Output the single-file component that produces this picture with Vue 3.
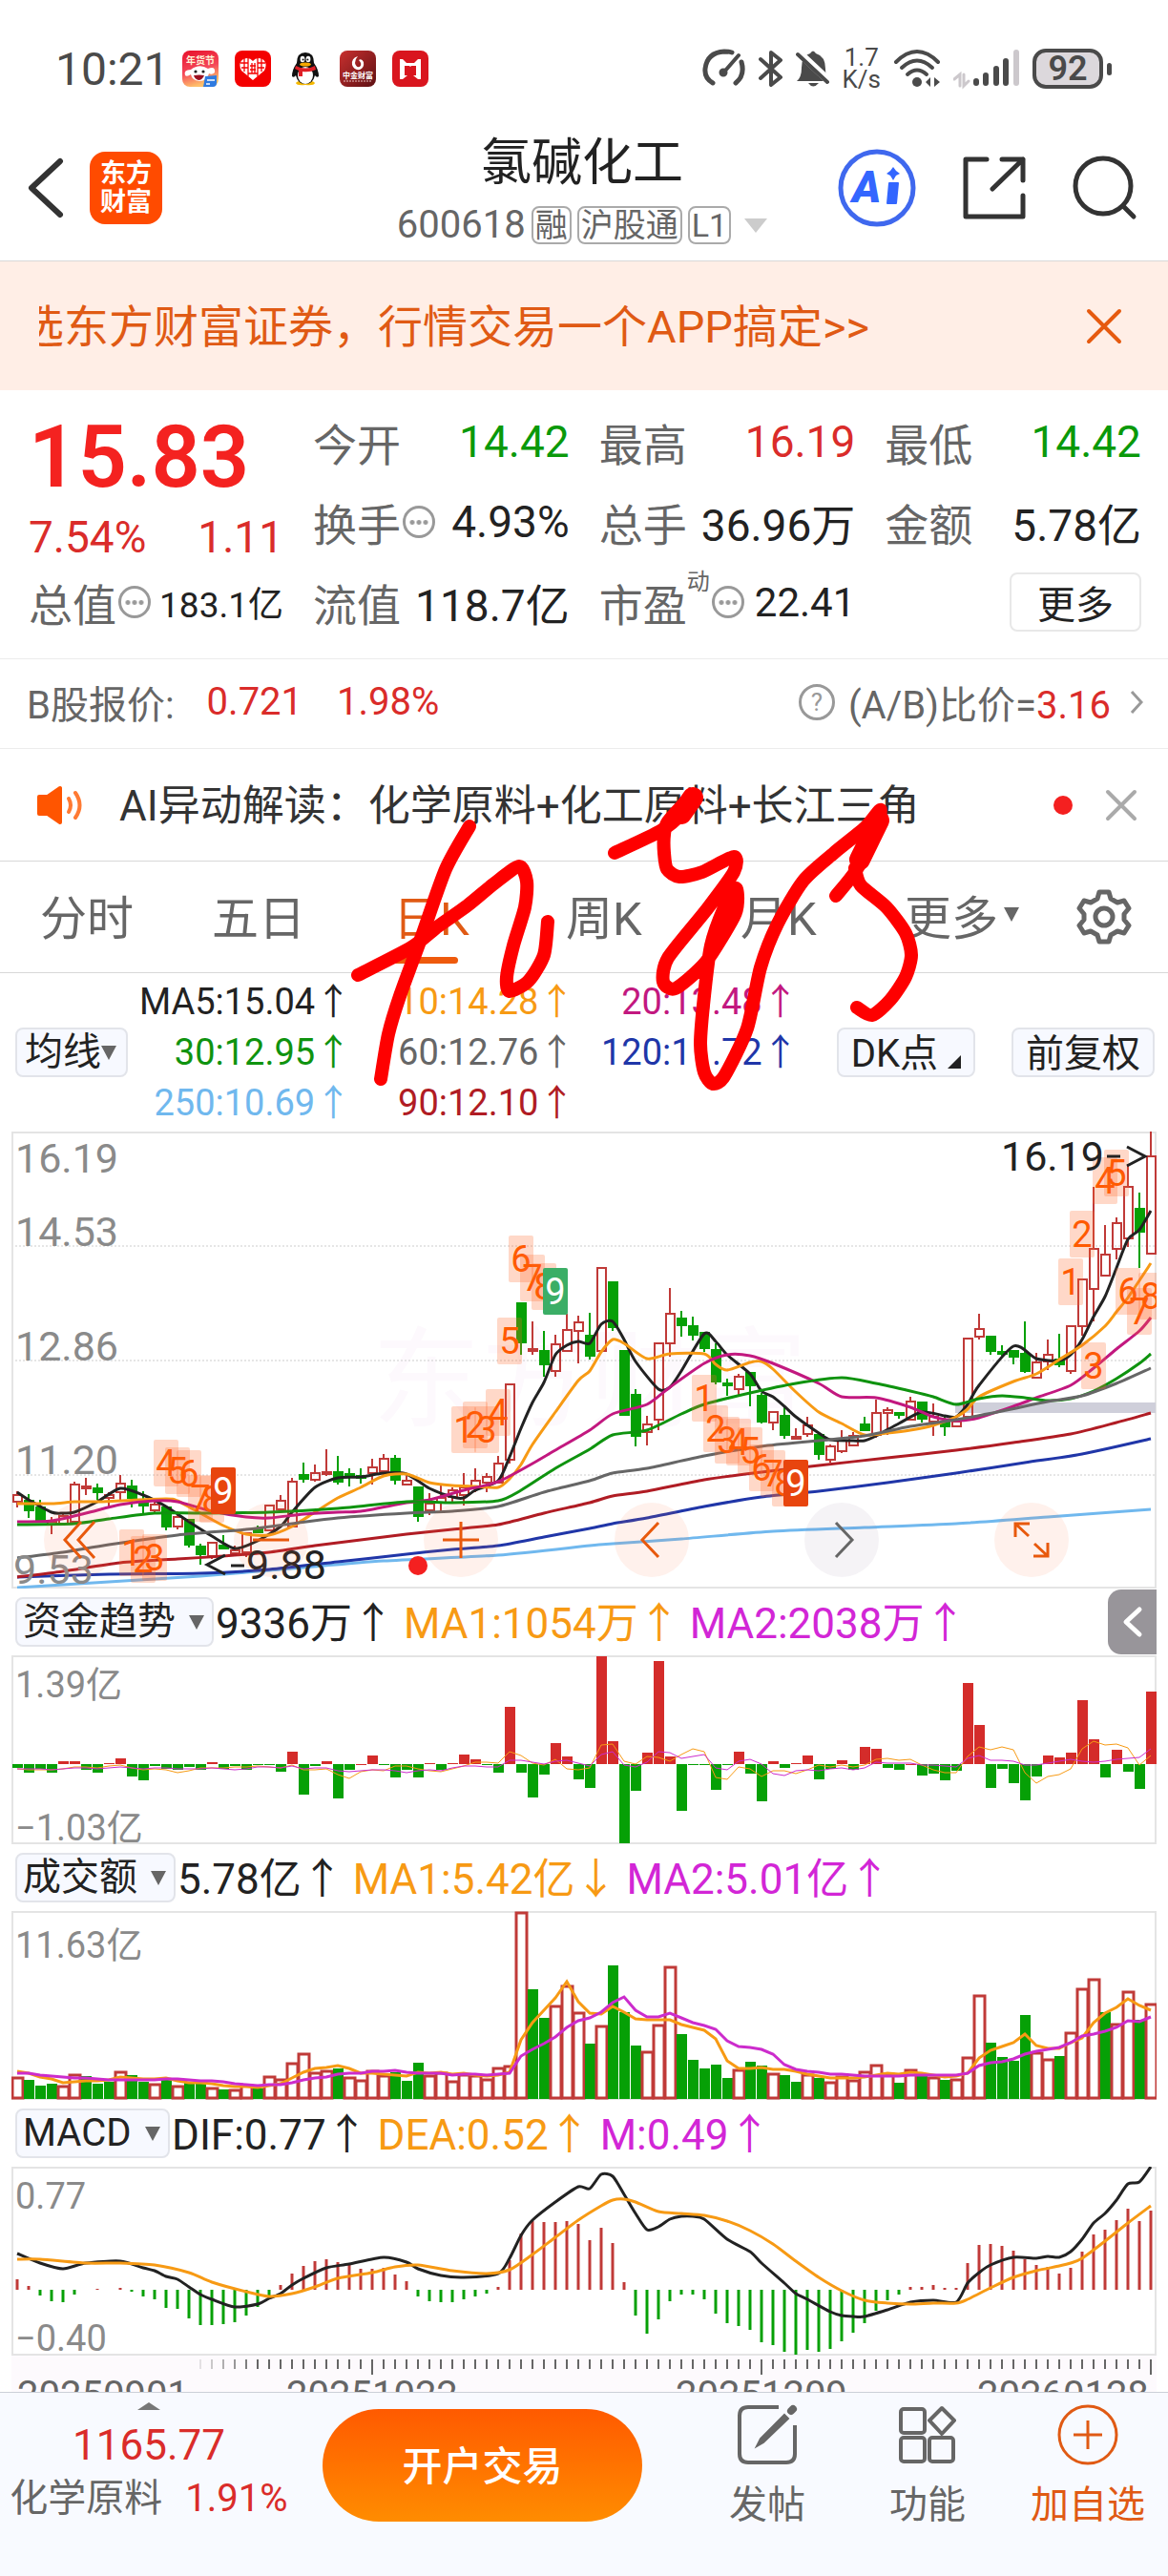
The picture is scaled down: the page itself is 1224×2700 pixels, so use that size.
<template>
  <div class="stock-page">
    <div class="status-bar">
      <div class="status-left">
        <span class="clock">10:21</span>
        <svg class="app-icon" viewBox="0 0 38 38">
          <defs>
            <linearGradient id="festival" x1="0" y1="0" x2="0.3" y2="1">
              <stop offset="0" stop-color="#e8102a" />
              <stop offset="0.6" stop-color="#f4485a" />
              <stop offset="1" stop-color="#ffc06a" />
            </linearGradient>
          </defs>
          <rect width="38" height="38" rx="8" fill="url(#festival)" />
          <text x="19" y="14" font-size="10" font-weight="700" fill="#fff3d8" text-anchor="middle">年货节</text>
          <path d="M3 26 Q1 20 9 20 Q18 13 27 19 Q35 16 34 23 Q31 26 28 24 Q26 32 18 32 Q10 31 9 25 Q5 28 3 26Z" fill="#fff" />
          <circle cx="14" cy="22" r="1.6" fill="#222" />
          <circle cx="22" cy="22" r="1.6" fill="#222" />
          <path d="M12 26 Q18 25 23 26 Q21 31 17 31 Q13 30 12 26Z" fill="#9c1020" />
          <path d="M24 27 L36 26 V34 Q36 38 32 38 H22Z" fill="#2f7be0" />
          <path d="M26 31 H34 M25 35 H29" stroke="#fff" stroke-width="1.4" />
        </svg>
        <svg class="app-icon" viewBox="0 0 38 38">
          <rect width="38" height="38" rx="8" fill="#f40000" />
          <path d="M19 31 L7 21 Q3 13 9 9 Q15 6 19 11 Q23 6 29 9 Q35 13 31 21Z" fill="#fff" />
          <path d="M10 8 V22 M14 8 V27 M24 8 V27 M28 8 V22 M6 13 H14 M7 18 H14 M24 13 H32 M24 18 H31 M16 16 H22 M16 20 H22 M18 13 V24 M21 13 V24 M14 24 H24" stroke="#f40000" stroke-width="1.3" />
        </svg>
        <svg class="app-icon" viewBox="0 0 38 38">
          <path d="M9 34 Q11 31 19 32 Q27 31 29 34 Q28 37 19 36 Q10 37 9 34Z" fill="#f5b800" />
          <path d="M19 2 Q28 2 28 13 Q33 20 33 27 Q31 29 29 26 Q27 35 19 35 Q11 35 9 26 Q7 29 5 27 Q5 20 10 13 Q10 2 19 2Z" fill="#111" />
          <ellipse cx="19" cy="26" rx="8" ry="9" fill="#fff" />
          <ellipse cx="16" cy="9" rx="2.4" ry="3.2" fill="#fff" />
          <ellipse cx="22" cy="9" rx="2.4" ry="3.2" fill="#fff" />
          <circle cx="16.6" cy="9.4" r="1" fill="#111" />
          <circle cx="21.4" cy="9.4" r="1" fill="#111" />
          <ellipse cx="19" cy="14.5" rx="6" ry="2" fill="#f5a800" />
          <path d="M9 16 Q19 21 29 16 L30 20 Q24 23 16 22 V27 H12 V21 L8 19Z" fill="#e01f26" />
        </svg>
        <svg class="app-icon" viewBox="0 0 38 38">
          <defs>
            <linearGradient id="cicc" x1="0" y1="0" x2="1" y2="1">
              <stop offset="0" stop-color="#c9302f" />
              <stop offset="1" stop-color="#5d1013" />
            </linearGradient>
          </defs>
          <rect width="38" height="38" rx="8" fill="url(#cicc)" />
          <path d="M19 6 Q12 8 13 15 Q15 21 21 20 Q26 18 25 12 Q23 8 20 10 Q24 14 21 17 Q17 18 16 13 Q16 9 19 6Z" fill="#fff" />
          <text x="19" y="29" font-size="8" font-weight="700" fill="#fff" text-anchor="middle">中金财富</text>
          <path d="M4 32 H34" stroke="#e9c4c4" stroke-width="1" stroke-dasharray="2 1" />
        </svg>
        <svg class="app-icon" viewBox="0 0 38 38">
          <rect width="38" height="38" rx="8" fill="#d9151e" />
          <path d="M8 30 V9 H11 L15 13 H23 L27 9 H30 V30 H27 L22 26 H25 V16 H13 V26 H16 L11 30Z" fill="#fff" />
          <path d="M15 13 H23 L19 17Z" fill="#fff" />
        </svg>
      </div>
      <div class="status-right">
        <svg width="46" height="44" viewBox="0 0 46 44" fill="none" stroke="#4a4a4a" stroke-width="5" stroke-linecap="round">
          <path d="M11 37 Q2 32 3 22 Q5 5 23 4 Q28 4 31 5" />
          <path d="M41 15 Q45 29 35 37" />
          <path d="M38 8 L24 24" stroke-width="4" />
          <circle cx="22" cy="26" r="3" fill="#4a4a4a" stroke-width="3" />
        </svg>
        <svg width="26" height="44" viewBox="0 0 26 44" fill="none" stroke="#4a4a4a" stroke-width="4" stroke-linejoin="round" stroke-linecap="round">
          <path d="M2 12 L23 31 L13 39 V5 L23 13 L2 32" />
        </svg>
        <svg width="36" height="44" viewBox="0 0 36 44">
          <path d="M1 35 Q6 31 6 21 Q6 8 15 6 Q18 1 21 6 Q31 9 31 22 Q31 31 35 35Z M13 37 H24 Q18 44 13 37Z" fill="#4a4a4a" />
          <path d="M2 4 L36 36" stroke="#fff" stroke-width="8" />
          <path d="M2 7 L33 36" stroke="#4a4a4a" stroke-width="4" stroke-linecap="round" />
        </svg>
        <div class="net-speed"><span>1.7</span><span>K/s</span></div>
        <svg width="50" height="44" viewBox="0 0 50 44" fill="none" stroke="#4a4a4a" stroke-width="4" stroke-linecap="round">
          <path d="M3 15 Q25 -7 47 15" />
          <path d="M9 21 Q25 6 41 21" />
          <path d="M15 28 Q25 19 35 28" />
          <circle cx="25" cy="36" r="5" fill="#4a4a4a" stroke="none" />
          <path d="M34 36 L39 31 V41Z M43 31 V41 L49 36Z" fill="#4a4a4a" stroke="none" />
        </svg>
        <svg width="70" height="44" viewBox="0 0 70 44" fill="none" stroke="#4a4a4a" stroke-width="6" stroke-linecap="round">
          <path d="M1 33 L7 28 V40 M11 28 V40 L16 35" stroke="#ccc8cc" stroke-width="3" />
          <path d="M24 35 V37 M34 29 V37 M45 22 V37 M55 14 V37" />
          <path d="M66 5 V37" stroke="#ccc8cc" />
        </svg>
        <div class="battery">92</div>
      </div>
    </div>

    <header class="top-bar">
      <div class="top-left">
        <button class="icon-btn" aria-label="返回">
          <svg width="40" height="64" viewBox="0 0 40 64" fill="none" stroke="#333" stroke-width="6" stroke-linecap="round" stroke-linejoin="round">
            <path d="M35 4 L5 32 L35 60" />
          </svg>
        </button>
        <div class="brand"><span>东方</span><span>财富</span></div>
      </div>
      <div class="top-title">
        <h1>氯碱化工</h1>
        <div class="sub-title">
          <span>600618</span>
          <span class="tag">融</span>
          <span class="tag">沪股通</span>
          <span class="tag">L1</span>
          <i class="tri tri-light"></i>
        </div>
      </div>
      <div class="top-right">
        <button class="icon-btn" aria-label="AI">
          <svg width="82" height="82" viewBox="0 0 82 82">
            <circle cx="41" cy="41" r="38" fill="none" stroke="#3f68ee" stroke-width="5" />
            <text x="15" y="56" font-size="46" font-weight="900" font-style="italic" fill="#3366ff">A</text>
            <path d="M54 36 H63 L61 57 H52Z" fill="#3366ff" stroke="#3366ff" stroke-width="2" stroke-linejoin="round" />
            <path d="M58 19 L61 23 L65 26 L61 28 L58 33 L55 28 L51 26 L55 23Z" fill="#3366ff" />
          </svg>
        </button>
        <button class="icon-btn" aria-label="分享">
          <svg width="68" height="68" viewBox="0 0 68 68" fill="none" stroke="#333" stroke-width="5" stroke-linecap="round" stroke-linejoin="round">
            <path d="M26 4 H4 V64 H64 V42 M42 4 H64 V26 M64 4 L32 35" />
          </svg>
        </button>
        <button class="icon-btn" aria-label="搜索">
          <svg width="68" height="68" viewBox="0 0 68 68" fill="none" stroke="#333" stroke-width="5" stroke-linecap="round">
            <circle cx="32" cy="32" r="29" />
            <path d="M53 53 L64 64" />
          </svg>
        </button>
      </div>
    </header>

    <div class="promo">
      <div class="promo-text"><a href="#">选东方财富证券，行情交易一个APP搞定&gt;&gt;</a></div>
      <button class="icon-btn" aria-label="关闭广告">
        <svg width="38" height="38" viewBox="0 0 38 38" stroke="#e65a0f" stroke-width="4" stroke-linecap="round">
          <path d="M3 3 L35 35 M35 3 L3 35" />
        </svg>
      </button>
    </div>

    <section class="quote">
      <div class="quote-main">
        <div class="price">15.83</div>
        <div class="change"><span>7.54%</span><span>1.11</span></div>
        <div class="cell">
          <span class="cell-label">总值<i class="more-dot"></i></span>
          <span class="cell-value tiny">183.1亿</span>
        </div>
      </div>
      <div class="quote-grid">
        <div v-for="item in quotes" :key="item.label" class="cell">
          <span class="cell-label">{{ item.label }}<sup v-if="item.sup">{{ item.sup }}</sup><i v-if="item.tip" class="more-dot"></i></span>
          <span class="cell-value" :class="[item.tone, { small: item.small }]">{{ item.value }}</span>
        </div>
        <div class="cell cell-end">
          <button class="more-btn">更多</button>
        </div>
      </div>
    </section>

    <section class="b-share">
      <span>B股报价:</span>
      <span class="up b-price">0.721</span>
      <span class="up b-rate">1.98%</span>
      <span class="help">?</span>
      <span>(A/B)比价=<b class="up">3.16</b></span>
      <svg class="b-arrow" width="14" height="26" viewBox="0 0 14 26" fill="none" stroke="#999" stroke-width="3">
        <path d="M2 2 L12 13 L2 24" />
      </svg>
    </section>

    <div class="mid">
      <section class="ai-row">
        <svg width="50" height="42" viewBox="0 0 50 42" fill="none" stroke="#ff7a33" stroke-width="4" stroke-linecap="round">
          <path d="M3 12 H12 L25 3 V39 L12 30 H3Z" fill="#ff5500" stroke="#ff5500" stroke-linejoin="round" />
          <path d="M34 14 Q38 21 34 28" />
          <path d="M41 8 Q50 21 41 34" />
        </svg>
        <span class="ai-text">AI异动解读：化学原料+化工原料+长江三角</span>
        <i class="red-dot"></i>
        <button class="icon-btn" aria-label="关闭">
          <svg width="34" height="34" viewBox="0 0 34 34" stroke="#aaa" stroke-width="4" stroke-linecap="round">
            <path d="M3 3 L31 31 M31 3 L3 31" />
          </svg>
        </button>
      </section>

      <nav class="tabs">
        <button v-for="tab in tabs" :key="tab" class="tab" :class="{ active: tab === activeTab }" @click="activeTab = tab">
          {{ tab }}<i v-if="tab === '更多'" class="tri"></i>
        </button>
        <button class="icon-btn" aria-label="设置">
          <svg width="58" height="58" viewBox="0 0 58 58" fill="none" stroke="#666" stroke-width="5" stroke-linejoin="round">
            <path d="M24 3 H34 L36 10 L43 14 L50 12 L55 20 L50 26 V32 L55 38 L50 46 L43 44 L36 48 L34 55 H24 L22 48 L15 44 L8 46 L3 38 L8 32 V26 L3 20 L8 12 L15 14 L22 10Z" />
            <circle cx="29" cy="29" r="9" />
          </svg>
        </button>
      </nav>

      <section class="ma-row">
        <label class="pill">
          <select aria-label="主图指标"><option>均线</option></select>
          <i class="tri"></i>
        </label>
        <div class="ma-list">
          <span v-for="ma in maList" :key="ma.text" :class="ma.cls">{{ ma.text }}↑</span>
        </div>
        <button class="pill dk">DK点<i class="corner"></i></button>
        <button class="pill">前复权</button>
      </section>

      <!-- 手写批注 -->
      <svg class="ink" viewBox="0 0 1224 402" fill="none" stroke="#fe0000" stroke-width="14" stroke-linecap="round" stroke-linejoin="round">
        <path v-for="(stroke, n) in inkStrokes" :key="n" :d="smooth(stroke)" />
        <path d="M714 68 L726 51 M901 116 L921 75" stroke-width="22" />
      </svg>
    </div>

    <main class="charts">
      <div class="k-chart">
        <svg class="chart" viewBox="0 0 1200 479">
          <text x="378" y="300" font-size="114" fill="#fdf9fd">东方财富</text>
          <path class="grid-line" d="M0 120 H1200 M0 240 H1200 M0 360 H1200" />
          <rect class="frame" x="1" y="1" width="1198" height="477" />
          <rect x="989" y="284" width="210" height="11" fill="#cfcfda" />
          <g v-for="(c, i) in candles" :key="i" :class="c[0] ? 'k-up' : 'k-down'">
            <path :d="`M${cx(i)} ${c[1]} V${c[2]} M${cx(i)} ${c[3]} V${c[4]}`" />
            <rect :x="cx(i) - 4" :y="c[2]" width="9" :height="Math.max(c[3] - c[2], 1)" />
          </g>
          <path v-for="line in maLines" :key="line.cls" class="ma-line" :class="line.cls" :d="smooth(line.points.map(p => [cx(p[0]), p[1]]))" />
          <g class="axis-text">
            <text x="4" y="43">16.19</text>
            <text x="4" y="120">14.53</text>
            <text x="4" y="240">12.86</text>
            <text x="4" y="359">11.20</text>
            <text x="2" y="474">9.53</text>
          </g>
          <g v-for="(m, n) in marks" :key="n" :class="['mark', m[3]]">
            <rect :x="cx(m[0]) - 13" :y="m[1]" width="26" height="49" rx="2" />
            <text :x="cx(m[0])" :y="m[1] + 38">{{ m[2] }}</text>
          </g>
          <text class="peak" x="1037" y="41">16.19</text>
          <path class="peak-arrow" d="M1148 26 H1162 M1169 16 L1188 26 L1169 36" />
          <text class="peak" x="246" y="469">9.88</text>
          <path class="peak-arrow" d="M224 444 L205 454 L224 464 M230 455 H244" />
          <circle cx="426" cy="455" r="10" fill="#f42020" />
        </svg>
        <div class="k-tools">
          <button v-for="tool in tools" :key="tool.name" class="round-btn" :class="{ gray: tool.gray }" :aria-label="tool.name">
            <svg width="40" height="40" viewBox="0 0 40 40"><path :d="tool.d" /></svg>
          </button>
        </div>
      </div>

      <div class="ind-row">
        <label class="pill">
          <select aria-label="副图指标一"><option>资金趋势</option></select>
          <i class="tri"></i>
        </label>
        <span>9336万↑</span>
        <span class="orange">MA1:1054万↑</span>
        <span class="purple">MA2:2038万↑</span>
        <button class="side-tab" aria-label="展开">
          <svg width="22" height="34" viewBox="0 0 22 34" fill="none" stroke="#fff" stroke-width="5" stroke-linecap="round" stroke-linejoin="round">
            <path d="M18 4 L4 17 L18 30" />
          </svg>
        </button>
      </div>
      <svg class="chart" viewBox="0 0 1200 198">
        <rect class="frame" x="1" y="1" width="1198" height="196" />
        <rect v-for="(v, i) in flows" :key="i" :x="cx(i) - 5" :y="v > 0 ? 114 - v : 114" width="11" :height="Math.max(Math.abs(v), 1)" :fill="v >= 0 ? '#d42c2a' : '#06a006'" />
        <path class="thin orange-line" :d="poly(average(flows, 5, -5), 114)" />
        <path class="thin purple-line" :d="poly(average(flows, 10, -5), 114)" />
        <g class="axis-text sub">
          <text x="4" y="44">1.39亿</text>
          <text x="4" y="194">−1.03亿</text>
        </g>
      </svg>

      <div class="ind-row">
        <label class="pill">
          <select aria-label="副图指标二"><option>成交额</option></select>
          <i class="tri"></i>
        </label>
        <span>5.78亿↑</span>
        <span class="orange">MA1:5.42亿↓</span>
        <span class="purple">MA2:5.01亿↑</span>
      </div>
      <svg class="chart" viewBox="0 0 1200 198">
        <rect class="frame" x="1" y="1" width="1198" height="196" />
        <g v-for="(v, i) in volumes" :key="i">
          <rect v-if="v > 0" :x="cx(i) - 5" :y="198 - v" width="11" :height="v - 2" fill="#fff" stroke="#c03a38" stroke-width="3" />
          <rect v-else :x="cx(i) - 5" :y="197 + v" width="11" :height="-v" fill="#06a006" />
        </g>
        <path class="mid-line orange-line" :d="poly(average(volumes.map(Math.abs), 5, 30), 197)" />
        <path class="mid-line purple-line" :d="poly(average(volumes.map(Math.abs), 10, 28), 197)" />
        <g class="axis-text sub">
          <text x="4" y="49">11.63亿</text>
        </g>
      </svg>

      <div class="ind-row">
        <label class="pill">
          <select aria-label="副图指标三"><option>MACD</option></select>
          <i class="tri"></i>
        </label>
        <span>DIF:0.77↑</span>
        <span class="orange">DEA:0.52↑</span>
        <span class="purple">M:0.49↑</span>
      </div>
      <svg class="chart" viewBox="0 0 1200 198">
        <rect class="frame" x="1" y="1" width="1198" height="196" />
        <path v-for="(v, i) in macd" :key="i" :d="`M${cx(i)} 129 v${-v}`" :stroke="v > 0 ? '#c03a38' : '#06a006'" stroke-width="3" />
        <path class="mid-line black-line" :d="smooth(dif.map(p => [cx(p[0]), p[1]]))" />
        <path class="mid-line orange-line" :d="smooth(dea.map(p => [cx(p[0]), p[1]]))" />
        <g class="axis-text sub">
          <text x="4" y="44">0.77</text>
          <text x="4" y="193">−0.40</text>
        </g>
      </svg>

      <div class="date-axis">
        <svg class="chart" viewBox="0 0 1200 20">
          <path v-for="n in 84" :key="n" class="tick" :d="`M${cx(n + 15)} 4 V${[31, 65, 99].includes(n + 15) ? 20 : 14}`" :opacity="Math.min(n / 6, 1)" />
        </svg>
        <div class="dates">
          <span>20250901</span>
          <span>20251022</span>
          <span>20251209</span>
          <span>20260128</span>
        </div>
      </div>
    </main>

    <footer class="bottom-bar">
      <div class="sector">
        <i class="tri-up"></i>
        <div class="up sector-index">1165.77</div>
        <div class="sector-name">化学原料<span class="up">1.91%</span></div>
      </div>
      <button class="cta">开户交易</button>
      <div class="actions">
        <button class="action">
          <svg width="64" height="64" viewBox="0 0 64 64" fill="none" stroke="#666" stroke-width="4">
            <path d="M44 3 H12 Q3 3 3 12 V52 Q3 61 12 61 H52 Q61 61 61 52 V22" />
            <path d="M50 11 L54 15 L28 40 L21 44 L25 36Z" fill="#666" stroke-width="2" />
            <path d="M57 7 L59 5" stroke-width="8" stroke-linecap="round" />
          </svg>
          发帖
        </button>
        <button class="action">
          <svg width="64" height="64" viewBox="0 0 64 64" fill="none" stroke="#666" stroke-width="4" stroke-linejoin="round">
            <rect x="4" y="5" width="25" height="25" rx="3" />
            <rect x="4" y="35" width="25" height="25" rx="3" />
            <rect x="34" y="35" width="25" height="25" rx="3" />
            <path d="M47 4 L60 17 L47 31 L34 17Z" />
          </svg>
          功能
        </button>
        <button class="action add">
          <svg width="64" height="64" viewBox="0 0 64 64" fill="none" stroke="#e05a14" stroke-width="3">
            <circle cx="32" cy="32" r="30" />
            <path d="M32 17 V47 M17 32 H47" />
          </svg>
          加自选
        </button>
      </div>
    </footer>
  </div>
</template>

<script setup>
import { ref } from 'vue'

const quotes = [
  { label: '今开', value: '14.42', tone: 'down' },
  { label: '最高', value: '16.19', tone: 'up' },
  { label: '最低', value: '14.42', tone: 'down' },
  { label: '换手', value: '4.93%', tip: true },
  { label: '总手', value: '36.96万' },
  { label: '金额', value: '5.78亿' },
  { label: '流值', value: '118.7亿' },
  { label: '市盈', sup: '动', value: '22.41', tip: true, small: true }
]

const tabs = ['分时', '五日', '日K', '周K', '月K', '更多']
const activeTab = ref('日K')

const maList = [
  { text: 'MA5:15.04', cls: 'ma5' },
  { text: '10:14.28', cls: 'ma10' },
  { text: '20:13.48', cls: 'ma20' },
  { text: '30:12.95', cls: 'ma30' },
  { text: '60:12.76', cls: 'ma60' },
  { text: '120:11.72', cls: 'ma120' },
  { text: '250:10.69', cls: 'ma250' },
  { text: '90:12.10', cls: 'ma90' }
]

const tools = [
  { name: '最左', d: 'M20 1 L3 20 L20 39 M34 1 L17 20 L34 39' },
  { name: '缩小', d: 'M1 20 H39' },
  { name: '放大', d: 'M1 20 H39 M20 1 V39' },
  { name: '左移', d: 'M27 2 L10 20 L27 38' },
  { name: '右移', d: 'M14 2 L31 20 L14 38', gray: true },
  { name: '全屏', d: 'M3 17 V3 H18 M3 3 L17 16 M37 23 V37 H22 M37 37 L23 24' }
]

// 每根K线: [是否上涨, 最高, 实体上沿, 实体下沿, 最低]
const candles = [
  [1, 377, 381, 388, 394], [0, 380, 387, 397, 405], [0, 386, 394, 408, 409], [1, 404, 409, 412, 422], [1, 400, 403, 411, 411],
  [1, 367, 370, 409, 409], [1, 363, 372, 374, 381], [0, 369, 374, 378, 386], [1, 378, 381, 384, 393], [1, 360, 369, 378, 386],
  [0, 365, 372, 384, 394], [0, 377, 386, 392, 401], [1, 384, 391, 397, 399], [0, 393, 394, 414, 418], [1, 398, 404, 414, 417],
  [0, 407, 407, 433, 436], [0, 432, 435, 443, 454], [1, 431, 431, 445, 448], [0, 423, 434, 437, 438], [1, 434, 439, 442, 443],
  [1, 421, 421, 441, 446], [0, 413, 417, 420, 421], [1, 392, 392, 418, 418], [1, 381, 387, 396, 397], [1, 363, 367, 414, 414],
  [0, 347, 360, 364, 368], [1, 349, 358, 365, 367], [1, 333, 357, 359, 361], [0, 340, 357, 367, 370], [0, 353, 359, 361, 372],
  [0, 353, 361, 363, 369], [1, 343, 352, 358, 370], [1, 338, 343, 356, 361], [0, 339, 343, 365, 370], [1, 361, 366, 370, 371],
  [0, 373, 373, 403, 409], [1, 379, 390, 397, 402], [1, 371, 384, 389, 399], [1, 373, 376, 383, 389], [1, 358, 373, 381, 392],
  [1, 353, 366, 374, 378], [1, 358, 362, 368, 378], [1, 340, 348, 368, 368], [1, 265, 265, 344, 348], [0, 180, 180, 221, 234],
  [1, 199, 228, 230, 234], [0, 209, 230, 244, 257], [1, 213, 223, 251, 257], [1, 191, 208, 230, 231], [1, 193, 200, 209, 243],
  [0, 190, 214, 235, 239], [1, 143, 143, 230, 230], [0, 158, 158, 205, 209], [0, 230, 230, 297, 297], [0, 270, 276, 319, 330],
  [1, 298, 307, 315, 329], [1, 222, 222, 302, 313], [1, 164, 191, 222, 236], [0, 188, 196, 203, 215], [0, 194, 204, 213, 219],
  [0, 211, 211, 227, 231], [0, 222, 229, 262, 265], [0, 259, 264, 266, 277], [1, 254, 257, 270, 278], [0, 252, 253, 266, 288],
  [0, 274, 277, 304, 306], [1, 293, 294, 305, 313], [0, 289, 298, 318, 322], [1, 311, 320, 322, 322], [1, 299, 308, 317, 320],
  [0, 318, 318, 338, 344], [1, 328, 330, 344, 347], [1, 313, 324, 335, 337], [1, 315, 319, 329, 330], [0, 299, 307, 313, 314],
  [1, 281, 295, 318, 321], [1, 289, 292, 295, 318], [0, 294, 295, 297, 301], [1, 278, 283, 302, 303], [0, 283, 284, 301, 305],
  [1, 285, 299, 304, 319], [0, 299, 304, 309, 319], [1, 298, 304, 309, 310], [1, 217, 217, 299, 299], [1, 191, 207, 215, 218],
  [0, 215, 215, 230, 234], [0, 224, 231, 233, 235], [0, 229, 230, 236, 244], [0, 199, 233, 251, 253], [1, 232, 242, 258, 258],
  [1, 218, 234, 241, 250], [0, 212, 239, 244, 247], [1, 203, 204, 251, 254], [1, 154, 155, 204, 214], [1, 58, 123, 165, 199],
  [1, 98, 129, 151, 151], [1, 90, 96, 123, 134], [1, 34, 58, 112, 121], [0, 64, 81, 105, 143], [1, 0, 26, 128, 128]
]

const maLines = [
  { cls: 'ma250', points: [[0, 478], [8, 472], [16, 466], [24, 458], [32, 450], [42, 444], [50, 434], [52, 432], [58, 427], [66, 419], [74, 415], [82, 411], [90, 404], [99, 396]] },
  { cls: 'ma120', points: [[0, 467], [8, 464], [16, 463], [22, 459], [28, 451], [34, 443], [38, 438], [42, 434], [46, 425], [50, 416], [52, 411], [55, 405], [60, 393], [65, 383], [70, 377], [76, 368], [82, 358], [88, 347], [93, 338], [99, 322]] },
  { cls: 'ma90', points: [[0, 467], [4, 461], [9, 452], [14, 448], [18, 445], [22, 441], [26, 434], [30, 428], [34, 422], [38, 417], [42, 412], [46, 400], [50, 389], [52, 382], [55, 377], [60, 365], [65, 357], [70, 350], [76, 342], [82, 334], [87, 326], [92, 317], [96, 305], [99, 295]] },
  { cls: 'ma5', points: [[0, 378], [1, 386], [3, 399], [4, 400], [5, 399], [7, 388], [9, 374], [11, 381], [13, 393], [15, 409], [17, 424], [19, 437], [21, 429], [23, 414], [24, 399], [26, 373], [28, 363], [30, 362], [32, 358], [34, 359], [36, 374], [38, 383], [39, 384], [40, 376], [42, 366], [43, 341], [44, 311], [45, 284], [46, 263], [47, 234], [48, 224], [49, 220], [50, 222], [51, 202], [52, 199], [53, 218], [54, 241], [56, 270], [57, 268], [58, 251], [60, 212], [61, 220], [62, 234], [64, 254], [65, 272], [66, 278], [67, 288], [68, 299], [70, 316], [71, 323], [73, 324], [74, 324], [75, 319], [77, 306], [79, 294], [81, 298], [82, 299], [83, 286], [84, 266], [87, 225], [89, 238], [91, 240], [92, 234], [93, 218], [94, 194], [95, 173], [96, 143], [97, 113], [98, 103], [99, 83]] },
  { cls: 'ma10', points: [[0, 390], [3, 390], [5, 388], [7, 388], [9, 387], [13, 385], [14, 387], [16, 400], [18, 413], [20, 422], [22, 423], [24, 414], [26, 399], [28, 384], [30, 373], [32, 361], [34, 359], [36, 368], [38, 371], [40, 372], [42, 373], [43, 364], [44, 349], [45, 328], [47, 294], [49, 261], [50, 251], [51, 231], [52, 218], [53, 222], [55, 238], [57, 233], [60, 233], [61, 244], [62, 250], [64, 242], [65, 241], [66, 249], [68, 273], [70, 294], [72, 306], [74, 318], [76, 316], [78, 313], [80, 308], [82, 299], [83, 291], [84, 278], [87, 262], [89, 254], [91, 239], [93, 224], [95, 204], [96, 189], [97, 174], [99, 138]] },
  { cls: 'ma20', points: [[0, 409], [3, 408], [6, 400], [9, 391], [12, 387], [14, 388], [17, 398], [20, 404], [22, 405], [25, 401], [28, 399], [30, 398], [34, 389], [36, 386], [39, 376], [42, 367], [45, 348], [47, 334], [50, 313], [52, 296], [55, 286], [57, 268], [60, 243], [62, 234], [64, 235], [66, 243], [70, 264], [72, 278], [75, 279], [78, 289], [80, 299], [82, 303], [84, 300], [87, 288], [89, 279], [92, 266], [94, 248], [96, 228], [98, 209], [99, 195]] },
  { cls: 'ma30', points: [[0, 412], [5, 411], [8, 406], [12, 400], [16, 400], [22, 399], [28, 395], [34, 388], [38, 389], [42, 387], [44, 376], [47, 353], [50, 333], [52, 318], [55, 313], [58, 296], [60, 286], [64, 274], [68, 264], [72, 258], [75, 264], [78, 272], [80, 278], [82, 286], [84, 280], [86, 277], [88, 279], [90, 282], [92, 280], [94, 272], [96, 259], [98, 243], [99, 233]] },
  { cls: 'ma60', points: [[0, 447], [4, 441], [8, 433], [14, 423], [20, 417], [24, 411], [28, 405], [34, 400], [38, 398], [42, 393], [46, 378], [50, 366], [52, 358], [55, 353], [60, 340], [65, 330], [70, 324], [74, 319], [78, 309], [82, 302], [86, 293], [90, 283], [93, 277], [96, 264], [99, 248]] }
]

// 九转序列: [K线序号, 顶部, 数字, 样式]
const marks = [
  [10, 417, 1], [11, 424, 2], [12, 422, 3], [13, 323, 4], [14, 331, 5], [15, 334, 6], [16, 360, 7], [17, 361, 8], [18, 352, 9, 'buy'],
  [39, 288, 1], [40, 283, 2], [41, 288, 3], [42, 270, 4], [43, 195, 5], [44, 109, 6], [45, 129, 7], [46, 138, 8], [47, 143, 9, 'sell'],
  [60, 255, 1], [61, 287, 2], [62, 299, 3], [63, 301, 4], [64, 310, 5], [65, 328, 6], [66, 334, 7], [67, 344, 8], [68, 344, 9, 'buy'],
  [92, 133, 1], [93, 83, 2], [94, 221, 3], [95, 27, 4], [96, 19, 5], [97, 143, 6], [98, 164, 7], [99, 148, 8]
]

const flows = [
  -4, -9, -5, -9, 3, 3, -6, -9, 1, 6, -13, -17, -2, -5, -6, -3, -6, 2, -5, -2,
  -6, -1, -1, -8, 13, -32, -2, 3, -36, -6, 0, 9, -1, -14, -6, -14, 1, -6, 1, 10,
  5, -1, -9, 60, -9, -35, -11, 22, 8, -16, -25, 113, 24, -83, -28, 12, 108, 8, -49, -1,
  -1, -27, -1, 13, -10, -39, 3, -4, 1, 9, -16, -5, 4, -6, 18, 16, -4, -6, 0, -12,
  -10, -17, -7, 85, 41, -25, -5, -20, -38, -13, 9, 7, 12, 67, 26, -14, 15, -8, -26, 76
]

// 正数为红柱, 负数为绿柱
const volumes = [
  23, -20, -14, -16, 14, 26, -24, -16, -18, 29, -25, -18, 16, -20, 14, -18, -16, 12, -10, 10,
  15, -11, 24, 21, 38, 48, 28, 30, -32, 23, 20, 30, 25, -28, -19, -38, 25, 28, 19, 26,
  25, 21, 33, 35, 196, -115, -85, 98, 119, 91, -58, 77, -140, -91, -56, 50, 78, 139, -68, -41,
  -32, -36, -22, 31, -39, -35, 27, -25, -18, 26, -22, 18, 24, 20, 29, 36, 27, -17, 31, -25,
  23, -20, 21, 44, 109, -59, -44, -40, -88, 49, 42, -45, 70, 116, 126, -91, 79, 113, -83, 100
]

const macd = [
  11, 4, -6, -12, -13, -5, 0, 1, 0, 2, -2, -7, -10, -19, -20, -30, -37, -37, -36, -34,
  -27, -18, -8, 5, 17, 25, 30, 32, 29, 27, 22, 22, 23, 16, 9, -7, -12, -13, -13, -10,
  -7, -4, 3, 31, 59, 72, 71, 71, 72, 69, 52, 65, 49, 8, -27, -46, -31, -12, -5, -5,
  -10, -25, -35, -38, -42, -55, -58, -65, -68, -63, -65, -62, -54, -45, -35, -22, -11, -5, 3, 3,
  5, 2, 2, 28, 47, 48, 46, 41, 32, 26, 24, 17, 23, 40, 58, 63, 73, 85, 72, 83
]

const dif = [
  [0, 91], [2, 101], [4, 107], [6, 101], [9, 99], [11, 106], [12, 109], [13, 115], [14, 118], [15, 126], [16, 134], [17, 139], [19, 147],
  [21, 144], [22, 138], [23, 133], [24, 124], [25, 117], [27, 106], [29, 102], [32, 95], [34, 100], [35, 107], [37, 114], [39, 116],
  [42, 112], [43, 96], [44, 72], [45, 56], [47, 37], [49, 21], [50, 23], [51, 8], [52, 10], [53, 29], [54, 49], [55, 66], [56, 63],
  [57, 55], [58, 52], [59, 52], [60, 55], [62, 76], [64, 89], [65, 101], [67, 122], [68, 133], [69, 139], [71, 152], [72, 156],
  [73, 157], [74, 157], [76, 150], [78, 142], [80, 140], [82, 142], [83, 122], [84, 111], [85, 103], [87, 95], [89, 96], [90, 94],
  [91, 95], [92, 89], [93, 76], [94, 59], [95, 49], [96, 35], [97, 18], [98, 16], [99, 0]
]

const dea = [
  [0, 97], [2, 97], [6, 101], [9, 101], [12, 103], [15, 111], [17, 121], [20, 131], [22, 136], [24, 133], [26, 126], [28, 117],
  [31, 111], [33, 105], [35, 103], [38, 109], [41, 112], [43, 108], [45, 92], [47, 74], [49, 56], [51, 41], [52, 35], [53, 34],
  [54, 37], [56, 47], [58, 49], [60, 51], [62, 57], [64, 67], [66, 81], [68, 99], [70, 116], [72, 130], [74, 140], [76, 143],
  [78, 144], [80, 143], [82, 143], [83, 139], [85, 127], [87, 116], [89, 109], [91, 104], [92, 101], [93, 96], [95, 78], [97, 59], [99, 41]
]

const inkStrokes = [
  [[492, 81], [467, 126], [441, 199], [419, 259], [407, 299], [399, 346]],
  [[375, 237], [431, 208], [459, 186], [490, 164], [518, 141], [544, 123], [552, 139], [550, 166], [538, 206], [531, 239], [534, 254], [554, 243], [570, 216], [574, 181]],
  [[644, 109], [692, 86], [714, 68], [726, 48], [700, 76], [696, 90], [696, 109], [699, 126], [712, 134], [736, 129], [769, 113], [769, 129], [740, 169], [700, 219], [695, 244], [708, 251], [740, 223], [769, 176], [773, 159], [771, 146], [759, 166], [745, 206], [738, 259], [734, 309], [738, 339], [747, 351], [759, 343], [783, 293], [797, 229], [815, 183], [842, 138], [874, 109], [906, 83], [923, 64], [914, 96], [896, 129], [876, 154]],
  [[896, 125], [902, 143], [929, 166], [949, 193], [955, 216], [949, 239], [933, 263], [914, 279], [898, 271]]
]

const cx = (i) => 6 + 12 * i

// 经过所有点的平滑曲线
const smooth = (pts) => {
  let d = `M${pts[0][0]} ${pts[0][1]}`
  for (let i = 0; i < pts.length - 1; i++) {
    const p0 = pts[i - 1] || pts[i]
    const p1 = pts[i]
    const p2 = pts[i + 1]
    const p3 = pts[i + 2] || p2
    const c1 = [p1[0] + (p2[0] - p0[0]) / 8, p1[1] + (p2[1] - p0[1]) / 8]
    const c2 = [p2[0] - (p3[0] - p1[0]) / 8, p2[1] - (p3[1] - p1[1]) / 8]
    d += ` C${c1.join(' ')} ${c2.join(' ')} ${p2.join(' ')}`
  }
  return d
}

const average = (list, days, before) => list.map((_, i) => {
  let sum = 0
  for (let k = i - days + 1; k <= i; k++) sum += k < 0 ? before : list[k]
  return sum / days
})

const poly = (list, base) => 'M' + list.map((v, i) => `${cx(i)} ${Math.round(base - v)}`).join(' L')
</script>

<style>
body {
  background: #fff;
}
</style>

<style scoped>
.stock-page {
  font-family: Roboto, "Noto Sans CJK SC", sans-serif;
  color: #222;
  background: #fff;
}

button {
  font-family: inherit;
  color: inherit;
  border: none;
  background: none;
  padding: 0;
  cursor: pointer;
}

svg {
  display: block;
  flex-shrink: 0;
}

.up {
  color: #da2c2a;
  font-weight: 400;
}

.down {
  color: #0a990a;
}

.orange {
  color: #f79a14;
}

.purple {
  color: #d226d6;
}

.tri {
  display: inline-block;
  border: 8px solid transparent;
  border-top: 15px solid #666;
  border-bottom: none;
}

.tri-light {
  border-width: 15px 12px 0;
  border-top-color: #ccc;
  margin-left: 8px;
}

/* 状态栏 */
.status-bar {
  height: 120px;
  padding: 24px 68px 0 58px;
  box-sizing: border-box;
  display: flex;
  justify-content: space-between;
  align-items: center;
  color: #4a4a4a;
}

.status-left,
.status-right {
  display: flex;
  align-items: center;
}

.status-right {
  gap: 13px;
}

.clock {
  margin-right: 13px;
  font-size: 48px;
}

.app-icon {
  width: 38px;
  height: 38px;
}

.app-icon + .app-icon {
  margin-left: 17px;
}

.net-speed {
  display: flex;
  flex-direction: column;
  align-items: center;
  font-size: 26px;
  line-height: 23px;
}

.battery {
  position: relative;
  width: 66px;
  height: 34px;
  line-height: 34px;
  border: 4px solid #4a4a4a;
  border-radius: 14px;
  background: #dcd8dc;
  font-size: 36px;
  font-weight: 600;
  text-align: center;
}

.battery::after {
  content: "";
  position: absolute;
  right: -13px;
  top: 11px;
  width: 5px;
  height: 13px;
  border-radius: 3px;
  background: #4a4a4a;
}

/* 标题栏 */
.top-bar {
  display: grid;
  grid-template-columns: 1fr auto 1fr;
  align-items: center;
  height: 153px;
  border-bottom: 1px solid #d8d8d8;
  padding: 0 32px 0 28px;
}

.top-left,
.top-right {
  display: flex;
  align-items: center;
}

.top-left {
  gap: 26px;
}

.top-right {
  justify-content: flex-end;
  gap: 48px;
}

.brand {
  width: 76px;
  height: 76px;
  box-sizing: border-box;
  padding: 8px 0;
  border-radius: 16px;
  background: #ff4b00;
  color: #fff;
  font-size: 27px;
  line-height: 30px;
  font-weight: 700;
  display: flex;
  flex-direction: column;
  align-items: center;
}

.top-title {
  padding-top: 9px;
  text-align: center;
}

.top-title h1 {
  margin: 0;
  font-size: 53px;
  line-height: 70px;
  font-weight: 400;
}

.sub-title {
  display: flex;
  align-items: center;
  gap: 6px;
  font-size: 40px;
  line-height: 60px;
  color: #666;
}

.tag {
  border: 2px solid #aaa;
  border-radius: 8px;
  padding: 0 2px;
  font-size: 34px;
  line-height: 36px;
}

/* 广告条 */
.promo {
  display: flex;
  align-items: center;
  justify-content: space-between;
  height: 135px;
  padding: 0 48px 0 41px;
  background: #ffeee6;
}

.promo-text {
  overflow: hidden;
  padding-bottom: 6px;
  white-space: nowrap;
  font-size: 47px;
}

.promo-text a {
  margin-left: -21px;
  color: #e05a14;
  text-decoration: none;
}

/* 行情 */
.quote {
  display: grid;
  grid-template-columns: 267fr 868fr;
  gap: 31px;
  padding: 12px 28px 17px 30px;
  border-bottom: 1px solid #ececec;
}

.price {
  height: 112px;
  line-height: 118px;
  font-size: 90px;
  font-weight: 600;
  color: #f42220;
}

.change {
  display: flex;
  justify-content: space-between;
  line-height: 60px;
  height: 56px;
  font-size: 46px;
  color: #da2c2a;
}

.quote-grid {
  display: grid;
  grid-template-columns: repeat(3, 1fr);
  column-gap: 31px;
}

.cell {
  display: flex;
  align-items: center;
  justify-content: space-between;
  height: 84px;
  white-space: nowrap;
}

.cell-end {
  justify-content: flex-end;
}

.cell-label {
  display: flex;
  align-items: center;
  font-size: 46px;
  color: #666;
}

.cell-label sup {
  align-self: flex-start;
  font-size: 24px;
  line-height: 24px;
}

.cell-value {
  font-size: 46px;
}

.cell-value.small {
  font-size: 42px;
}

.cell-value.tiny {
  font-size: 37px;
}

.more-dot {
  flex-shrink: 0;
  width: 34px;
  height: 34px;
  margin-left: 2px;
  border: 3px solid #999;
  border-radius: 50%;
  background: radial-gradient(circle, #999 2px, transparent 3px) center / 7px 7px repeat-x;
  background-clip: content-box;
  padding: 0 4px;
  box-sizing: border-box;
}

.more-btn {
  width: 138px;
  height: 62px;
  padding-bottom: 4px;
  border: 2px solid #e8e8e8;
  border-radius: 8px;
  font-size: 40px;
}

/* B股 */
.b-share {
  display: flex;
  align-items: center;
  height: 93px;
  box-sizing: border-box;
  height: 94px;
  padding: 0 26px 4px 28px;
  border-bottom: 1px solid #ececec;
  font-size: 40px;
  color: #666;
}

.b-price {
  margin-left: 34px;
}

.b-rate {
  margin-left: 36px;
}

.help {
  margin-left: auto;
  margin-right: 14px;
  width: 32px;
  height: 32px;
  line-height: 32px;
  border: 3px solid #999;
  border-radius: 50%;
  font-size: 26px;
  color: #999;
  text-align: center;
}

.b-arrow {
  margin-left: 20px;
}

/* 异动解读 + 周期 + 均线 */
.mid {
  position: relative;
}

.ink {
  position: absolute;
  left: 0;
  top: 0;
  width: 100%;
  pointer-events: none;
}

.ai-row {
  display: flex;
  align-items: center;
  height: 117px;
  padding: 0 32px 0 38px;
  border-bottom: 1px solid #d8d8d8;
  font-size: 44px;
  color: #333;
}

.ai-text {
  flex: 1;
  margin-left: 37px;
  padding-bottom: 5px;
}

.red-dot {
  width: 20px;
  height: 20px;
  margin-right: 34px;
  border-radius: 50%;
  background: #f42020;
}

.tabs {
  display: grid;
  grid-template-columns: 180fr 190fr 181fr 183fr 172fr 180fr 58fr;
  height: 116px;
  padding: 0 38px 0 42px;
  border-bottom: 1px solid #d8d8d8;
}

.tab {
  position: relative;
  justify-self: start;
  display: flex;
  align-items: center;
  padding-bottom: 6px;
  font-size: 49px;
  color: #666;
  white-space: nowrap;
}

.tab.active {
  color: #e05a14;
}

.tab.active::after {
  content: "";
  position: absolute;
  left: 0;
  bottom: 9px;
  width: 68px;
  height: 7px;
  border-radius: 4px;
  background: #ee5a0c;
}

.tab .tri {
  margin-left: 6px;
}

.ma-row {
  display: flex;
  align-items: center;
  height: 166px;
  padding: 0 14px 0 16px;
}

.ma-list {
  flex: 1;
  display: grid;
  grid-template-columns: repeat(3, 1fr);
  margin-right: 40px;
  font-size: 38px;
  line-height: 53px;
  text-align: right;
  white-space: nowrap;
}

.pill {
  display: flex;
  align-items: center;
  justify-content: space-between;
  height: 52px;
  box-sizing: border-box;
  padding: 0 10px 0 8px;
  border: 2px solid #e2e4ea;
  border-radius: 8px;
  background: #f7f9ff;
  font-size: 40px;
  white-space: nowrap;
}

.pill select {
  appearance: none;
  border: none;
  background: none;
  padding: 0;
  font: inherit;
  line-height: 48px;
  color: inherit;
}

button.pill {
  padding: 0 13px 4px;
}

.dk {
  margin-right: 38px;
  gap: 10px;
}

.corner {
  align-self: flex-end;
  margin-bottom: 3px;
  border-left: 14px solid transparent;
  border-bottom: 14px solid #222;
}

.ma5 { color: #222; stroke: #222; }
.ma10 { color: #f79a14; stroke: #f79a14; }
.ma20 { color: #c2187f; stroke: #c2187f; }
.ma30 { color: #0f930f; stroke: #0f930f; }
.ma60 { color: #666; stroke: #666; }
.ma90 { color: #b01c24; stroke: #b01c24; }
.ma120 { color: #2036a8; stroke: #2036a8; }
.ma250 { color: #70b8ee; stroke: #70b8ee; }

/* 图表 */
.charts {
  padding: 0 12px;
}

.chart {
  width: 100%;
}

.k-chart {
  position: relative;
}

.frame {
  fill: none;
  stroke: #e4e4e4;
  stroke-width: 2;
}

.grid-line {
  stroke: #ccc;
  stroke-width: 1;
  stroke-dasharray: 2 2;
}

.k-up path,
.k-up rect {
  stroke: #c03a38;
  stroke-width: 2;
  fill: none;
}

.k-down path,
.k-down rect {
  stroke: #06a006;
  stroke-width: 2;
  fill: #06a006;
}

.ma-line {
  fill: none;
  stroke-width: 3;
}

.axis-text {
  font-size: 43px;
  fill: #8a8a8a;
}

.axis-text.sub {
  font-size: 38px;
}

.mark rect {
  fill: #ff6a2a;
  fill-opacity: 0.26;
}

.mark text {
  font-size: 38px;
  fill: #ff5a00;
  text-anchor: middle;
}

.mark.buy rect {
  fill: #e8450e;
  fill-opacity: 1;
}

.mark.sell rect {
  fill: #3bae66;
  fill-opacity: 1;
}

.mark.buy text,
.mark.sell text {
  fill: #fff;
}

.peak {
  font-size: 43px;
  fill: #222;
}

.peak-arrow {
  fill: none;
  stroke: #222;
  stroke-width: 3;
}

.k-tools {
  position: absolute;
  left: 0;
  right: 0;
  bottom: 12px;
  display: flex;
  justify-content: space-between;
  padding: 0 92px 0 34px;
}

.round-btn {
  width: 78px;
  height: 78px;
  border-radius: 50%;
  background: rgba(255, 120, 70, 0.1);
  display: flex;
  align-items: center;
  justify-content: center;
}

.round-btn path {
  fill: none;
  stroke: #e8590c;
  stroke-width: 3;
}

.round-btn.gray {
  background: rgba(110, 80, 130, 0.07);
}

.round-btn.gray path {
  stroke: #666;
}

.ind-row {
  position: relative;
  display: flex;
  align-items: center;
  height: 70px;
  padding-left: 4px;
  font-size: 44px;
  white-space: nowrap;
}

.ind-row .pill {
  margin-right: 2px;
  padding: 0 8px 0 6px;
  gap: 14px;
}

.ind-row span {
  padding-bottom: 5px;
}

.ind-row span + span {
  margin-left: 10px;
}

.side-tab {
  position: absolute;
  right: 0;
  top: 1px;
  width: 51px;
  height: 68px;
  border-radius: 14px 0 0 14px;
  background: #98959a;
  display: flex;
  align-items: center;
  justify-content: center;
}

.thin {
  fill: none;
  stroke-width: 1;
}

.mid-line {
  fill: none;
  stroke-width: 3;
}

.orange-line {
  stroke: #f79a14;
}

.purple-line {
  stroke: #cc2ccc;
}

.black-line {
  stroke: #222;
}

.date-axis {
  height: 38px;
  overflow: hidden;
  background: #fdfafd;
}

.tick {
  stroke: #666;
  stroke-width: 2;
}

.dates {
  display: grid;
  grid-template-columns: 282fr 408fr 316fr 180fr;
  padding: 0 8px 0 6px;
  font-size: 40px;
  line-height: 44px;
  color: #666;
}

/* 底部栏 */
.bottom-bar {
  display: flex;
  height: 192px;
  border-top: 1px solid #ccd0d8;
  background: #f8faff;
}

.sector {
  width: 312px;
  display: flex;
  flex-direction: column;
  align-items: center;
}

.tri-up {
  margin-top: 10px;
  border: 12px solid transparent;
  border-bottom: 8px solid #777;
  border-top: none;
}

.sector-index {
  margin-top: 7px;
  font-size: 44px;
  line-height: 60px;
}

.sector-name {
  font-size: 40px;
  line-height: 52px;
  color: #666;
}

.sector-name span {
  margin-left: 24px;
}

.cta {
  width: 335px;
  height: 118px;
  margin: 17px 0 0 26px;
  padding-bottom: 5px;
  border-radius: 59px;
  background: linear-gradient(#ff5a00, #ff8c00);
  color: #fff;
  font-size: 42px;
  font-weight: 500;
}

.actions {
  flex: 1;
  display: grid;
  grid-template-columns: repeat(3, 168px);
  justify-content: end;
}

.action {
  display: flex;
  flex-direction: column;
  align-items: center;
  padding-top: 12px;
  gap: 12px;
  font-size: 40px;
  line-height: 60px;
  color: #666;
}

.action.add {
  color: #e05a14;
}
</style>
